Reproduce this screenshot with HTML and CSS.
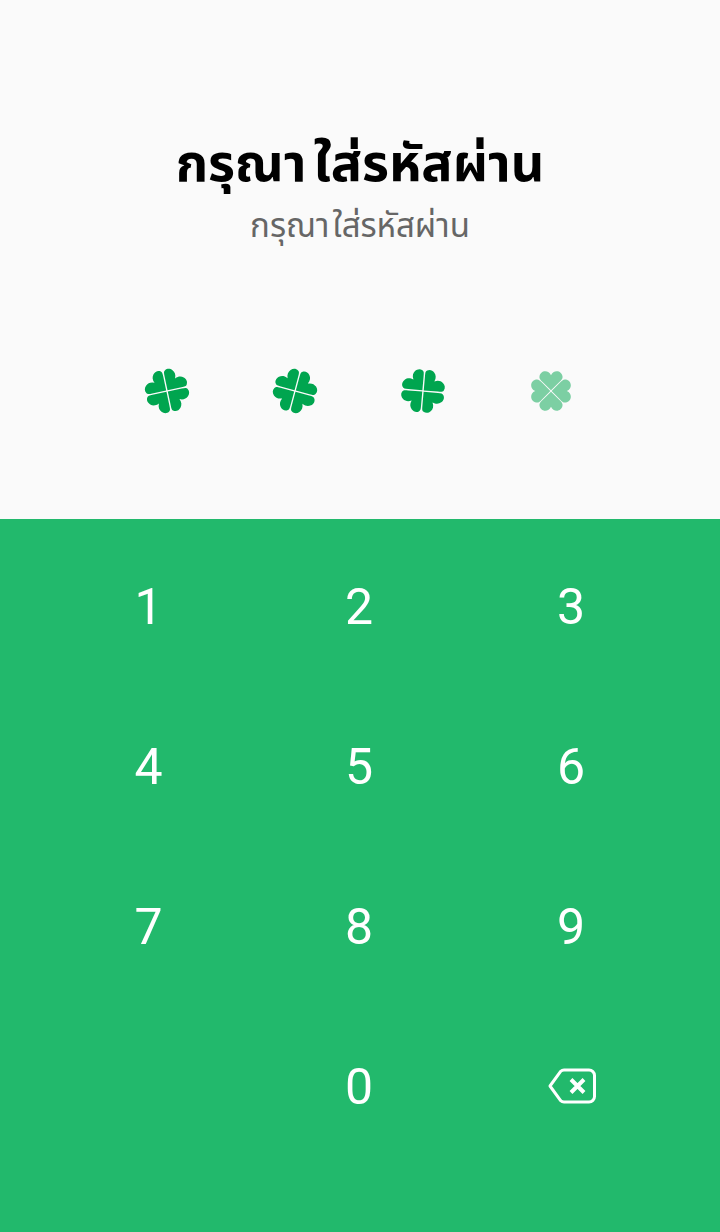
FILE: index.html
```html
<!DOCTYPE html>
<html lang="th">
<head>
  <meta charset="UTF-8" />
  <title>Passcode</title>
  <link rel="stylesheet" href="styles.css">
</head>
<body>
  <svg class="defs" width="0" height="0" aria-hidden="true">
    <symbol id="clover" viewBox="-24 -24 48 48">
      <path id="leaf" d="M0 -1 L-10.500 -11.500 C-13 -14 -14 -15 -13.500 -17 C-12.800 -20 -10 -21.500 -7 -21.300 C-4 -21 -1.500 -19.500 0 -15.500 C1.500 -19.500 4 -21 7 -21.300 C10 -21.500 12.800 -20 13.500 -17 C14 -15 13 -14 10.500 -11.500 Z" />
      <use href="#leaf" transform="rotate(90)" />
      <use href="#leaf" transform="rotate(180)" />
      <use href="#leaf" transform="rotate(270)" />
    </symbol>
    <symbol id="clover-empty" viewBox="-24 -24 48 48">
      <path id="leaf-empty" d="M0 -0.7 L-8.500 -9.200 C-11 -11.500 -12.500 -13 -12 -15.500 C-11.500 -18.500 -9 -20.700 -6 -20.700 C-3.500 -20.700 -1.200 -19.500 0 -16.500 C1.200 -19.500 3.500 -20.700 6 -20.700 C9 -20.700 11.500 -18.500 12 -15.500 C12.500 -13 11 -11.500 8.500 -9.200 Z" />
      <use href="#leaf-empty" transform="rotate(90)" />
      <use href="#leaf-empty" transform="rotate(180)" />
      <use href="#leaf-empty" transform="rotate(270)" />
    </symbol>
  </svg>

  <header class="top">
    <h1 class="title">กรุณา<span class="word">ใส่รหัสผ่าน</span></h1>
    <p class="subtitle">กรุณา<span class="word">ใส่รหัสผ่าน</span></p>
    <div class="dots">
      <svg class="clover tilt-right"><use href="#clover" /></svg>
      <svg class="clover tilt-left"><use href="#clover" /></svg>
      <svg class="clover tilt-cross"><use href="#clover" /></svg>
      <svg class="clover empty"><use href="#clover-empty" /></svg>
    </div>
  </header>

  <main class="keypad">
    <button class="key">1</button>
    <button class="key">2</button>
    <button class="key">3</button>
    <button class="key">4</button>
    <button class="key">5</button>
    <button class="key">6</button>
    <button class="key">7</button>
    <button class="key">8</button>
    <button class="key">9</button>
    <span class="key"></span>
    <button class="key">0</button>
    <button class="key" aria-label="Delete">
      <svg class="backspace" viewBox="0 0 48 36" fill="none" stroke="#fff" stroke-width="3" stroke-linejoin="round" stroke-linecap="round">
        <path d="M16 2 H41 A5.500 5.500 0 0 1 46.500 7.500 V28.500 A5.500 5.500 0 0 1 41 34 H16 Q14 34 12.800 32.800 L2 18 L12.800 3.200 Q14 2 16 2 Z" />
        <path d="M23 11.500 L36 24.500 M36 11.500 L23 24.500" stroke-width="4" stroke-linecap="butt" />
      </svg>
    </button>
  </main>
</body>
</html>
```

FILE: styles.css
```css
* {
  box-sizing: border-box;
}

body {
  margin: 0;
  height: 1232px;
  display: flex;
  flex-direction: column;
  font-family: "Noto Sans Thai", "Noto Sans", "DejaVu Sans", Roboto, sans-serif;
  background: #fafafa;
}

.defs {
  display: block;
  height: 0;
}

.top {
  height: 519px;
  padding-top: 130px;
  display: flex;
  flex-direction: column;
  align-items: center;
  text-align: center;
}

.title {
  margin: 0;
  font-size: 52px;
  line-height: 70px;
  font-weight: bold;
  color: #000000;
}

.subtitle {
  margin: 4px 0 0;
  font-size: 33px;
  line-height: 46px;
  color: #666666;
}

.word {
  margin-left: 7px;
}

.subtitle .word {
  margin-left: 3px;
}

.dots {
  margin-top: 118px;
  display: flex;
  gap: 82px;
  margin-right: 2px;
}

.clover {
  width: 46px;
  height: 46px;
  fill: #00a54f;
}

.tilt-right {
  transform: rotate(33deg);
}

.tilt-left {
  transform: rotate(-30deg);
}

.tilt-cross {
  transform: rotate(50deg);
}

.empty {
  opacity: 0.5;
}

.keypad {
  flex: 1;
  padding: 8px 0 65px 43px;
  display: grid;
  grid-template-columns: 211px 210px 214px;
  grid-template-rows: repeat(4, 160px);
  background: #22b96c;
}

.key {
  display: flex;
  align-items: center;
  justify-content: center;
  padding: 0;
  border: none;
  background: none;
  color: #ffffff;
  font-family: Roboto, sans-serif;
  font-size: 50px;
}

.backspace {
  width: 48px;
  height: 36px;
  margin: 0 0 3px 1px;
}
```
